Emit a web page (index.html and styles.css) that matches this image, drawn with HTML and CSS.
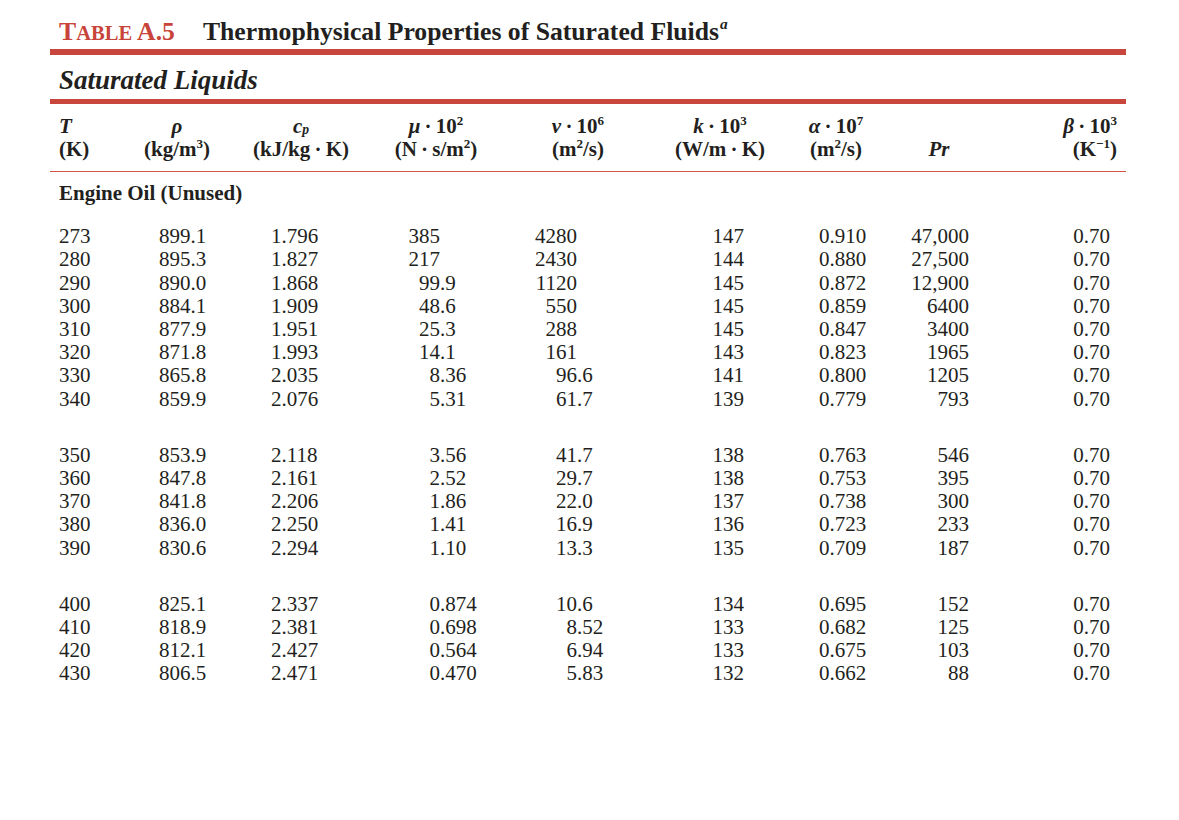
FILE: index.html
```html
<!DOCTYPE html>
<html lang="en">
<head>
<meta charset="utf-8">
<title>Table A.5 Thermophysical Properties of Saturated Fluids</title>
<link rel="stylesheet" href="styles.css">
</head>
<body>
<div class="page">
  <h1 class="title"><span class="tag">T<span class="sc">ABLE</span> A.5</span><span class="name">Thermophysical Properties of Saturated Fluids<sup class="fn">a</sup></span></h1>
  <div class="rule-thick r1"></div>
  <h2 class="sub">Saturated Liquids</h2>
  <div class="rule-thick r2"></div>
  <table class="props">
    <colgroup>
      <col class="w1"><col class="w2"><col class="w3"><col class="w4"><col class="w5"><col class="w6"><col class="w7"><col class="w8"><col class="w9">
    </colgroup>
    <thead>
      <tr class="h1row">
        <th class="c1"><i>T</i></th>
        <th><i>ρ</i></th>
        <th><i>c<sub>p</sub></i></th>
        <th><i>μ</i>&#8201;·&#8201;10<sup>2</sup></th>
        <th><i>ν</i>&#8201;·&#8201;10<sup>6</sup></th>
        <th><i>k</i>&#8201;·&#8201;10<sup>3</sup></th>
        <th><i>α</i>&#8201;·&#8201;10<sup>7</sup></th>
        <th></th>
        <th class="c9"><i>β</i>&#8201;·&#8201;10<sup>3</sup></th>
      </tr>
      <tr class="h2row">
        <th class="c1">(K)</th>
        <th>(kg/m<sup>3</sup>)</th>
        <th>(kJ/kg&#8201;·&#8201;K)</th>
        <th>(N&#8201;·&#8201;s/m<sup>2</sup>)</th>
        <th>(m<sup>2</sup>/s)</th>
        <th>(W/m&#8201;·&#8201;K)</th>
        <th>(m<sup>2</sup>/s)</th>
        <th><i>Pr</i></th>
        <th class="c9">(K<sup>−1</sup>)</th>
      </tr>
    </thead>
    <tbody>
      <tr class="section"><td colspan="9">Engine Oil (Unused)</td></tr>
      <tr><td class="d1">273</td><td class="d2">899.1</td><td class="d3">1.796</td><td class="dec"><span class="ip">385</span></td><td class="dec d5"><span class="ip">4280</span></td><td class="d6">147</td><td class="d7">0.910</td><td class="d8">47,000</td><td class="d9">0.70</td></tr>
      <tr><td class="d1">280</td><td class="d2">895.3</td><td class="d3">1.827</td><td class="dec"><span class="ip">217</span></td><td class="dec d5"><span class="ip">2430</span></td><td class="d6">144</td><td class="d7">0.880</td><td class="d8">27,500</td><td class="d9">0.70</td></tr>
      <tr><td class="d1">290</td><td class="d2">890.0</td><td class="d3">1.868</td><td class="dec"><span class="ip">99</span>.9</td><td class="dec d5"><span class="ip">1120</span></td><td class="d6">145</td><td class="d7">0.872</td><td class="d8">12,900</td><td class="d9">0.70</td></tr>
      <tr><td class="d1">300</td><td class="d2">884.1</td><td class="d3">1.909</td><td class="dec"><span class="ip">48</span>.6</td><td class="dec d5"><span class="ip">550</span></td><td class="d6">145</td><td class="d7">0.859</td><td class="d8">6400</td><td class="d9">0.70</td></tr>
      <tr><td class="d1">310</td><td class="d2">877.9</td><td class="d3">1.951</td><td class="dec"><span class="ip">25</span>.3</td><td class="dec d5"><span class="ip">288</span></td><td class="d6">145</td><td class="d7">0.847</td><td class="d8">3400</td><td class="d9">0.70</td></tr>
      <tr><td class="d1">320</td><td class="d2">871.8</td><td class="d3">1.993</td><td class="dec"><span class="ip">14</span>.1</td><td class="dec d5"><span class="ip">161</span></td><td class="d6">143</td><td class="d7">0.823</td><td class="d8">1965</td><td class="d9">0.70</td></tr>
      <tr><td class="d1">330</td><td class="d2">865.8</td><td class="d3">2.035</td><td class="dec"><span class="ip">8</span>.36</td><td class="dec d5"><span class="ip">96</span>.6</td><td class="d6">141</td><td class="d7">0.800</td><td class="d8">1205</td><td class="d9">0.70</td></tr>
      <tr><td class="d1">340</td><td class="d2">859.9</td><td class="d3">2.076</td><td class="dec"><span class="ip">5</span>.31</td><td class="dec d5"><span class="ip">61</span>.7</td><td class="d6">139</td><td class="d7">0.779</td><td class="d8">793</td><td class="d9">0.70</td></tr>
      <tr class="grp"><td class="d1">350</td><td class="d2">853.9</td><td class="d3">2.118</td><td class="dec"><span class="ip">3</span>.56</td><td class="dec d5"><span class="ip">41</span>.7</td><td class="d6">138</td><td class="d7">0.763</td><td class="d8">546</td><td class="d9">0.70</td></tr>
      <tr><td class="d1">360</td><td class="d2">847.8</td><td class="d3">2.161</td><td class="dec"><span class="ip">2</span>.52</td><td class="dec d5"><span class="ip">29</span>.7</td><td class="d6">138</td><td class="d7">0.753</td><td class="d8">395</td><td class="d9">0.70</td></tr>
      <tr><td class="d1">370</td><td class="d2">841.8</td><td class="d3">2.206</td><td class="dec"><span class="ip">1</span>.86</td><td class="dec d5"><span class="ip">22</span>.0</td><td class="d6">137</td><td class="d7">0.738</td><td class="d8">300</td><td class="d9">0.70</td></tr>
      <tr><td class="d1">380</td><td class="d2">836.0</td><td class="d3">2.250</td><td class="dec"><span class="ip">1</span>.41</td><td class="dec d5"><span class="ip">16</span>.9</td><td class="d6">136</td><td class="d7">0.723</td><td class="d8">233</td><td class="d9">0.70</td></tr>
      <tr><td class="d1">390</td><td class="d2">830.6</td><td class="d3">2.294</td><td class="dec"><span class="ip">1</span>.10</td><td class="dec d5"><span class="ip">13</span>.3</td><td class="d6">135</td><td class="d7">0.709</td><td class="d8">187</td><td class="d9">0.70</td></tr>
      <tr class="grp"><td class="d1">400</td><td class="d2">825.1</td><td class="d3">2.337</td><td class="dec"><span class="ip">0</span>.874</td><td class="dec d5"><span class="ip">10</span>.6</td><td class="d6">134</td><td class="d7">0.695</td><td class="d8">152</td><td class="d9">0.70</td></tr>
      <tr><td class="d1">410</td><td class="d2">818.9</td><td class="d3">2.381</td><td class="dec"><span class="ip">0</span>.698</td><td class="dec d5"><span class="ip">8</span>.52</td><td class="d6">133</td><td class="d7">0.682</td><td class="d8">125</td><td class="d9">0.70</td></tr>
      <tr><td class="d1">420</td><td class="d2">812.1</td><td class="d3">2.427</td><td class="dec"><span class="ip">0</span>.564</td><td class="dec d5"><span class="ip">6</span>.94</td><td class="d6">133</td><td class="d7">0.675</td><td class="d8">103</td><td class="d9">0.70</td></tr>
      <tr><td class="d1">430</td><td class="d2">806.5</td><td class="d3">2.471</td><td class="dec"><span class="ip">0</span>.470</td><td class="dec d5"><span class="ip">5</span>.83</td><td class="d6">132</td><td class="d7">0.662</td><td class="d8">88</td><td class="d9">0.70</td></tr>
    </tbody>
  </table>
</div>
</body>
</html>
```

FILE: styles.css
```css
html, body {
  margin: 0;
  padding: 0;
  background: #ffffff;
}

body {
  font-family: "Liberation Serif", "Times New Roman", serif;
  color: #231f20;
}

.page {
  margin-left: 50px;
  width: 1076px;
}

.title {
  margin: 0;
  padding: 17px 0 0 9px;
  font-size: 25.7px;
  line-height: 30px;
  font-weight: bold;
  white-space: nowrap;
}

.tag {
  color: #c8443a;
  margin-right: 28px;
}

.tag .sc {
  font-size: 0.8em;
}

.fn {
  font-size: 0.6em;
  font-style: italic;
  line-height: 0;
  vertical-align: 0.7em;
  margin-left: 1px;
}

.rule-thick {
  background: #c9463c;
}

.r1 {
  height: 6px;
  margin-top: 1px;
}

.sub {
  margin: 0;
  padding: 10px 0 0 9px;
  font-size: 27px;
  line-height: 30px;
  font-weight: bold;
  font-style: italic;
}

.r2 {
  height: 5px;
  margin-top: 4px;
}

.props {
  border-collapse: collapse;
  border-spacing: 0;
  table-layout: fixed;
  width: 1076px;
  font-size: 21px;
}

.w1 { width: 70px; }
.w2 { width: 114px; }
.w3 { width: 134px; }
.w4 { width: 136px; }
.w5 { width: 148px; }
.w6 { width: 136px; }
.w7 { width: 96px; }
.w8 { width: 110px; }
.w9 { width: 132px; }

.props th,
.props td {
  padding: 0;
  white-space: nowrap;
}

.props th {
  font-weight: bold;
  text-align: center;
  line-height: 23px;
  vertical-align: baseline;
}

.props th i {
  font-style: italic;
}

.props th.c1 {
  text-align: left;
  padding-left: 9px;
}

.props th.c9 {
  text-align: right;
  padding-right: 9px;
}

.h1row th {
  padding-top: 11px;
}

.h2row th {
  padding-bottom: 10px;
  border-bottom: 1px solid #d25549;
}

.props sup {
  font-size: 0.62em;
  line-height: 0;
  vertical-align: 0.62em;
}

.props sub {
  font-size: 0.65em;
  line-height: 0;
  vertical-align: -0.05em;
}

.section td {
  font-weight: bold;
  line-height: 23px;
  padding: 10px 0 20px 9px;
}

.props td {
  line-height: 23.2px;
}

.grp td {
  padding-top: 33px;
}

.props td.d1 { padding-left: 9px; }
.props td.d2 { padding-left: 39px; }
.props td.d3 { padding-left: 37px; }
.props td.d6 { text-align: right; padding-right: 44px; }
.props td.d7 { padding-left: 31px; }
.props td.d8 { text-align: right; padding-right: 25px; }
.props td.d9 { text-align: right; padding-right: 16px; }

.dec .ip {
  display: inline-block;
  width: 72px;
  text-align: right;
}

.dec.d5 .ip {
  width: 73px;
}
```
